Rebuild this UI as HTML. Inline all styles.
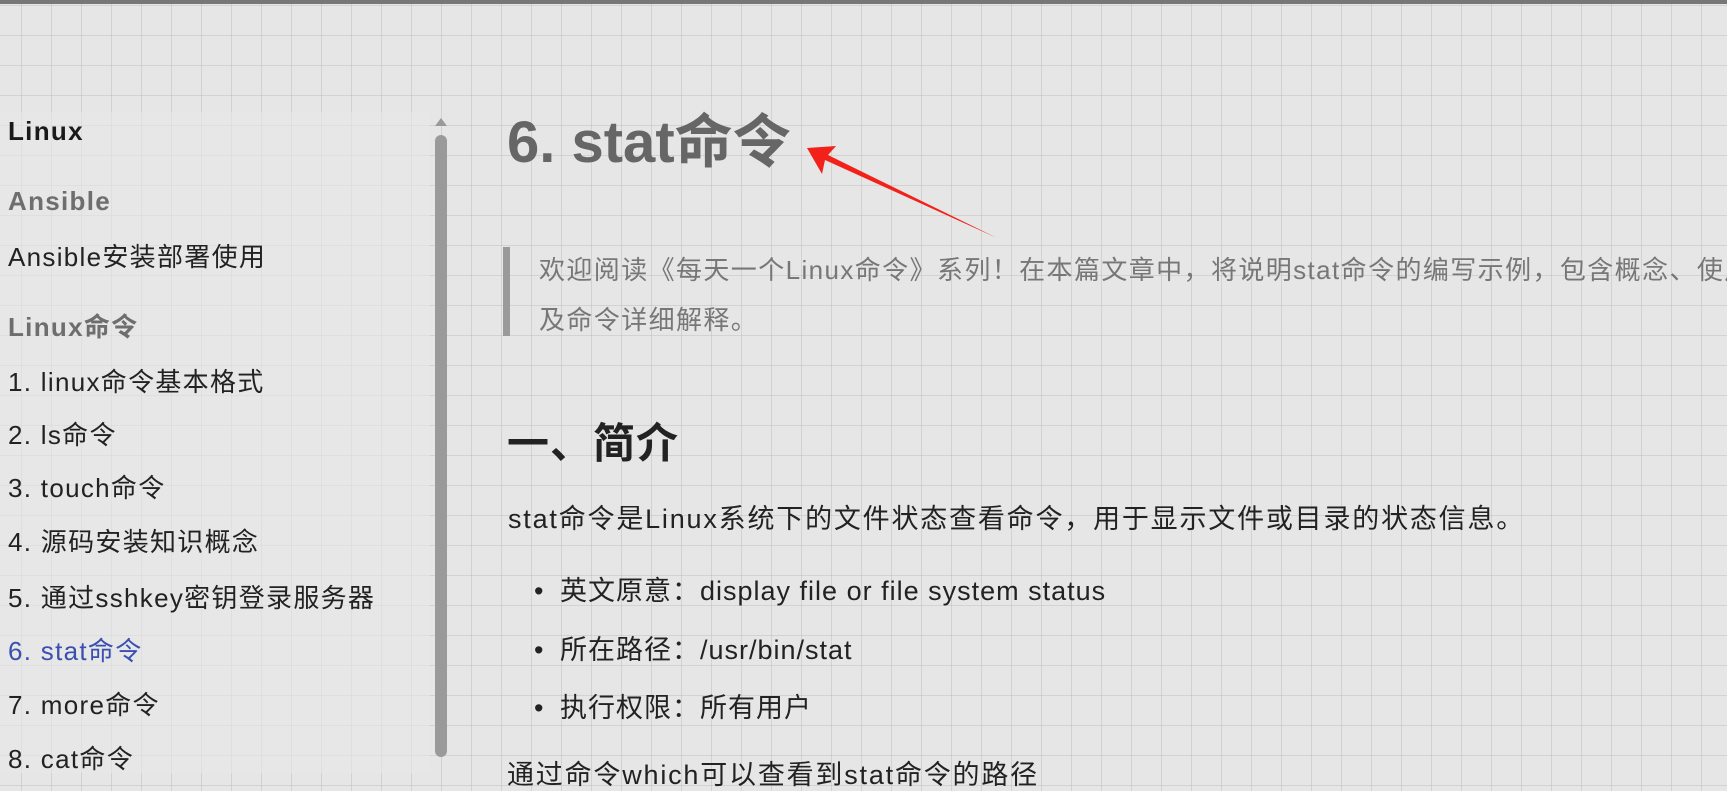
<!DOCTYPE html>
<html><head><meta charset="utf-8"><style>
html,body{margin:0;padding:0}
body{width:1727px;height:773px;overflow:hidden;position:relative;background-color:#e6e6e6;
background-image:linear-gradient(to right,rgba(180,170,170,.35) 1px,transparent 1px),linear-gradient(to bottom,rgba(180,170,170,.35) 1px,transparent 1px);
background-size:30px 30px;background-position:21px 5px;
font-family:"Liberation Sans","Noto Sans CJK SC",sans-serif;color:#222}
.topbar{position:absolute;left:0;top:0;width:1727px;height:4px;background:#777}
.side{position:absolute;left:0;top:112px;width:430px;height:661px;background:rgba(232,232,232,.6)}
.s{position:absolute;left:8px;font-size:26px;letter-spacing:1.3px;white-space:nowrap;line-height:30px}
.scroll{position:absolute;left:435px;top:135px;width:12px;height:622px;border-radius:6px;background:#9a9a9a}
.arrowup{position:absolute;left:435px;top:118px;width:0;height:0;border-left:6px solid transparent;border-right:6px solid transparent;border-bottom:8px solid #9a9a9a}
.t{position:absolute;white-space:nowrap;letter-spacing:1.8px}
.b{position:absolute;left:534px;font-size:27px;line-height:32px;letter-spacing:1px;white-space:nowrap}
.b i{font-style:normal;display:inline-block;width:26px;letter-spacing:0}
</style></head><body>
<div class="topbar"></div>
<div class="side"></div>
<div class="s" style="top:116px;font-weight:bold;color:#1a1a1a">Linux</div>
<div class="s" style="top:186px;font-weight:bold;color:#6e6e6e">Ansible</div>
<div class="s" style="top:242px">Ansible安装部署使用</div>
<div class="s" style="top:312px;font-weight:bold;color:#6e6e6e">Linux命令</div>
<div class="s" style="top:367px">1. linux命令基本格式</div>
<div class="s" style="top:420px">2. ls命令</div>
<div class="s" style="top:473px">3. touch命令</div>
<div class="s" style="top:527px">4. 源码安装知识概念</div>
<div class="s" style="top:583px">5. 通过sshkey密钥登录服务器</div>
<div class="s" style="top:636px;color:#3a4fb0">6. stat命令</div>
<div class="s" style="top:690px">7. more命令</div>
<div class="s" style="top:744px">8. cat命令</div>
<div class="arrowup"></div>
<div class="scroll"></div>

<div class="t" style="left:507px;top:108px;font-size:58px;font-weight:bold;color:#666;line-height:70px;letter-spacing:0">6. stat命令</div>
<svg style="position:absolute;left:0;top:0" width="1727" height="773">
<polygon points="807,148 836,146 828,155 997,238 825,160 822,174" fill="#f2221a"/>
</svg>
<div style="position:absolute;left:503px;top:247px;width:7px;height:89px;background:#9a9a9a"></div>
<div class="t" style="left:539px;top:245px;font-size:26px;color:#777;line-height:50px;width:1188px;overflow:hidden;letter-spacing:1.4px">欢迎阅读《每天一个Linux命令》系列！在本篇文章中，将说明stat命令的编写示例，包含概念、使用方法以<br>及命令详细解释。</div>
<div class="t" style="left:507px;top:419px;font-size:42px;font-weight:bold;color:#222;line-height:50px;letter-spacing:1px">一、简介</div>
<div class="t" style="left:508px;top:503px;font-size:27px;line-height:32px">stat命令是Linux系统下的文件状态查看命令，用于显示文件或目录的状态信息。</div>
<div class="b" style="top:575px"><i>•</i>英文原意：display file or file system status</div>
<div class="b" style="top:634px"><i>•</i>所在路径：/usr/bin/stat</div>
<div class="b" style="top:692px"><i>•</i>执行权限：所有用户</div>
<div class="t" style="left:507px;top:759px;font-size:27px;line-height:32px">通过命令which可以查看到stat命令的路径</div>
</body></html>
